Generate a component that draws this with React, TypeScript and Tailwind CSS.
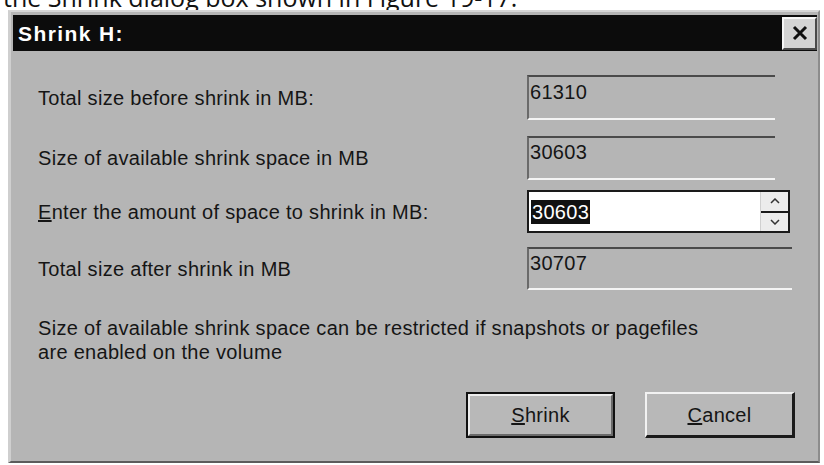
import React from "react";

function ReadOnlyField({ value, width, height, pt }: { value: string; width: string; height: string; pt: string }) {
  return (
    <div className={`${width} ${height} ${pt} border-t-[2px] border-t-[#4a4a4a] border-b-[2px] border-b-[#f4f4f4] border-l-[2px] border-l-[#6a6a6a] pl-[1px] leading-[20px]`}>
      {value}
    </div>
  );
}

function Spinner() {
  return (
    <div className="w-[28px] h-full flex flex-col border-l-[1px] border-l-[#d0d0d0]">
      <div className="flex-1 bg-[#ececec] border-b-[2px] border-b-[#1a1a1a] flex items-center justify-center">
        <svg width="10" height="6" viewBox="0 0 10 6">
          <path d="M1 5 L5 1 L9 5" fill="none" stroke="#333" strokeWidth="1.5" />
        </svg>
      </div>
      <div className="flex-1 bg-[#ececec] flex items-center justify-center">
        <svg width="10" height="6" viewBox="0 0 10 6">
          <path d="M1 1 L5 5 L9 1" fill="none" stroke="#333" strokeWidth="1.5" />
        </svg>
      </div>
    </div>
  );
}

export default function App() {
  return (
    <div className="w-[824px] h-[465px] bg-white overflow-hidden">
      {/* caption line from the surrounding page, cut off by the dialog */}
      <div className="h-[10px] overflow-hidden pl-[3px]">
        <p className="mt-[-15px] text-[25px] leading-[25px] text-[#111] font-['Open_Sans',sans-serif] whitespace-nowrap">
          the Shrink dialog box shown in Figure 19-17.
        </p>
      </div>

      <div className="ml-[8px] w-[812px] h-[453px] bg-[#b5b5b5] border-t-[2px] border-l-[3px] border-t-[#d6d6d6] border-l-[#cfcfcf] border-r-[2px] border-r-[#8c8c8c] border-b-[2px] border-b-[#5c5c5c] flex flex-col font-['Liberation_Sans',Arial,sans-serif] text-[#151515] text-[20px] tracking-[0.3px]">
        {/* title bar */}
        <div className="mt-[3px] ml-[2px] mr-[1px] h-[36px] bg-[#0c0c0c] flex items-center justify-between pl-[5px]">
          <span className="text-white font-bold text-[21px] tracking-[1.4px] leading-none">Shrink H:</span>
          <div className="w-[35px] h-[33px] bg-[#d4d4d4] border-t-[2px] border-l-[2px] border-t-[#f6f6f6] border-l-[#f6f6f6] border-r-[2px] border-b-[2px] border-r-[#4a4a4a] border-b-[#4a4a4a] flex items-center justify-center">
            <svg width="18" height="16" viewBox="0 0 18 16">
              <path d="M3 2 L15 14 M15 2 L3 14" stroke="#111" strokeWidth="3" />
            </svg>
          </div>
        </div>

        {/* fields */}
        <div className="pl-[27px] flex flex-col">
          <div className="mt-[24px] flex items-center">
            <span className="w-[489px]">Total size before shrink in MB:</span>
            <ReadOnlyField value="61310" width="w-[248px]" height="h-[45px]" pt="pt-[5px]" />
          </div>
          <div className="mt-[16px] flex items-center">
            <span className="w-[489px]">Size of available shrink space in MB</span>
            <ReadOnlyField value="30603" width="w-[248px]" height="h-[44px]" pt="pt-[4px]" />
          </div>
          <div className="mt-[10px] flex items-center">
            <span className="w-[489px]">
              <span className="underline">E</span>nter the amount of space to shrink in MB:
            </span>
            <div className="w-[263px] h-[43px] bg-white border-[2px] border-[#1a1a1a] flex items-stretch">
              <div className="flex-1 flex items-center pl-[2px]">
                <span className="bg-[#111] text-white leading-[24px] px-[1px]">30603</span>
              </div>
              <Spinner />
            </div>
          </div>
          <div className="mt-[14px] flex items-center">
            <span className="w-[489px]">Total size after shrink in MB</span>
            <ReadOnlyField value="30707" width="w-[265px]" height="h-[43px]" pt="pt-[4px]" />
          </div>

          <p className="mt-[26px] leading-[24px]">
            Size of available shrink space can be restricted if snapshots or pagefiles
            <br />
            are enabled on the volume
          </p>
        </div>

        {/* buttons */}
        <div className="mt-[28px] flex justify-end gap-[30px] pr-[23px]">
          <button className="w-[149px] h-[46px] bg-[#b8b8b8] border-[2px] border-[#111] flex items-center justify-center">
            <span className="w-full h-full flex items-center justify-center border-t-[2px] border-l-[2px] border-t-[#ededed] border-l-[#ededed] border-r-[2px] border-b-[2px] border-r-[#6a6a6a] border-b-[#6a6a6a]">
              <span className="underline">S</span>hrink
            </span>
          </button>
          <button className="w-[150px] h-[46px] bg-[#b8b8b8] border-t-[2px] border-l-[2px] border-t-[#f2f2f2] border-l-[#f2f2f2] border-r-[3px] border-b-[3px] border-r-[#1a1a1a] border-b-[#1a1a1a] flex items-center justify-center">
            <span className="underline">C</span>ancel
          </button>
        </div>
      </div>
    </div>
  );
}
